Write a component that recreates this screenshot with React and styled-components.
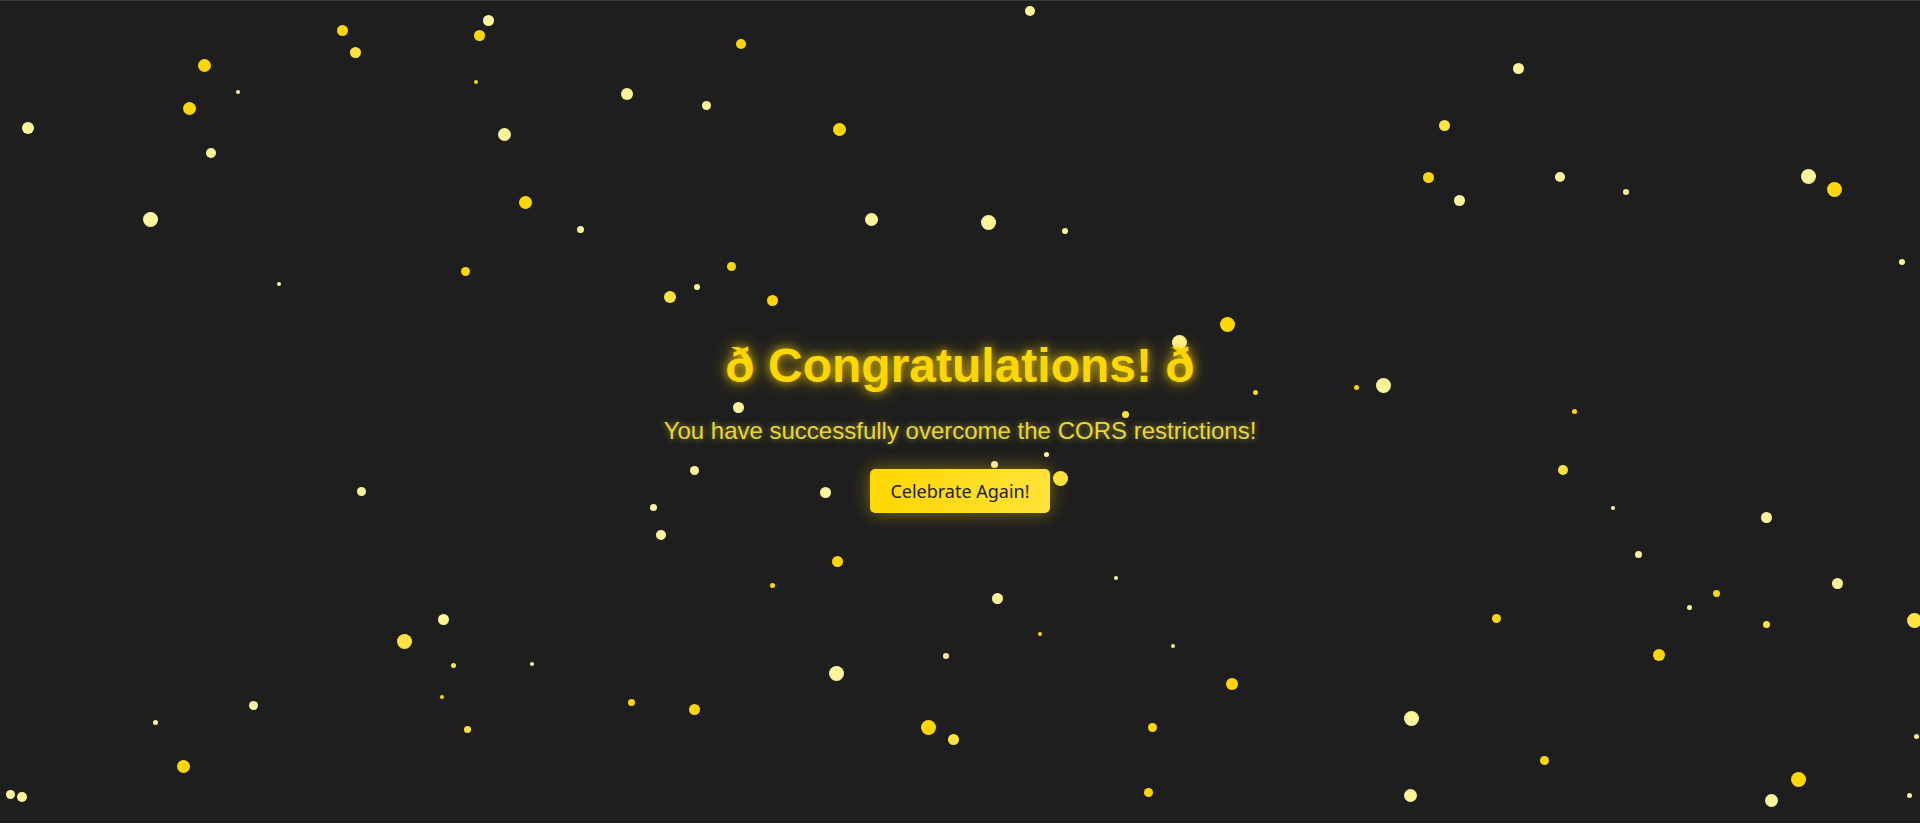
import React from 'react'
import styled, { createGlobalStyle } from 'styled-components'

const GlobalStyle = createGlobalStyle`
  html, body {
    margin: 0;
    padding: 0;
    background: #ffffff;
  }
`

const COLORS = {
  g: '#ffd700',
  m: '#ffe23d',
  p: '#fff49a',
}

// confetti measured on a 1568 x 674 canvas: [x, y, size, colour]
const CONFETTI = [
  [841, 8, 8, 'p'], [280, 24, 9, 'g'], [399, 16, 9, 'p'], [392, 28, 9, 'g'],
  [290, 42, 9, 'm'], [167, 53, 11, 'g'], [605, 35, 8, 'g'], [194, 74, 3, 'p'],
  [389, 66, 3, 'g'], [512, 76, 10, 'p'], [155, 88, 11, 'g'], [577, 85, 7, 'p'],
  [23, 104, 10, 'p'], [412, 109, 11, 'p'], [686, 105, 11, 'g'], [172, 124, 8, 'p'],
  [1240, 55, 9, 'p'], [1180, 102, 9, 'm'], [1167, 144, 9, 'g'], [1192, 163, 9, 'p'],
  [1274, 144, 8, 'p'], [1328, 156, 5, 'p'], [1477, 143, 12, 'p'], [1498, 154, 12, 'g'],
  [1553, 213, 5, 'p'], [123, 178, 12, 'p'], [429, 165, 11, 'g'], [474, 187, 6, 'p'],
  [712, 179, 11, 'p'], [807, 181, 12, 'p'], [870, 188, 5, 'p'], [228, 231, 3, 'p'],
  [380, 221, 7, 'g'], [597, 217, 7, 'g'], [569, 234, 5, 'p'], [547, 242, 10, 'm'],
  [631, 245, 9, 'g'], [963, 279, 12, 'p'], [1002, 264, 12, 'g'], [1025, 320, 4, 'g'],
  [1108, 316, 4, 'g'], [1130, 314, 12, 'p'], [603, 332, 9, 'p'], [919, 338, 6, 'm'],
  [1286, 335, 4, 'g'], [855, 370, 4, 'p'], [812, 379, 6, 'p'], [866, 390, 12, 'm'],
  [567, 383, 7, 'p'], [674, 401, 9, 'p'], [295, 400, 7, 'p'], [1276, 383, 8, 'm'],
  [534, 414, 6, 'p'], [540, 436, 8, 'p'], [1317, 414, 3, 'p'], [1443, 422, 9, 'p'],
  [684, 458, 9, 'g'], [1338, 452, 6, 'p'], [631, 477, 4, 'g'], [911, 471, 3, 'p'],
  [1501, 476, 9, 'p'], [1402, 484, 6, 'g'], [1380, 495, 4, 'p'], [815, 488, 9, 'p'],
  [362, 505, 9, 'p'], [1222, 504, 7, 'g'], [1443, 509, 6, 'm'], [1563, 506, 12, 'm'],
  [330, 523, 12, 'm'], [849, 517, 3, 'g'], [958, 527, 3, 'p'], [370, 543, 4, 'm'],
  [434, 541, 3, 'p'], [1355, 534, 10, 'g'], [773, 535, 5, 'p'], [683, 549, 12, 'p'],
  [1006, 558, 10, 'g'], [361, 568, 3, 'g'], [516, 573, 6, 'g'], [567, 579, 9, 'g'],
  [207, 575, 7, 'p'], [127, 589, 4, 'p'], [1153, 586, 12, 'p'], [758, 593, 12, 'g'],
  [941, 593, 7, 'g'], [382, 595, 6, 'm'], [779, 603, 9, 'm'], [1565, 601, 4, 'p'],
  [150, 625, 11, 'g'], [1261, 620, 7, 'g'], [1469, 636, 12, 'g'], [938, 646, 7, 'g'],
  [1152, 649, 11, 'p'], [1447, 653, 11, 'p'], [8, 648, 7, 'p'], [18, 650, 8, 'p'],
  [1559, 649, 4, 'p'],
]

const SCALE = 1920 / 1568

const Stage = styled.div`
  position: relative;
  overflow: hidden;
  height: 822px;
  border-top: 1px solid #3a3a3a;
  background: #1e1e1e;
  display: flex;
  justify-content: center;
  align-items: center;
  font-family: 'Liberation Sans', Arial, sans-serif;
`

const Content = styled.div`
  position: relative;
  z-index: 1;
  display: flex;
  flex-direction: column;
  align-items: center;
  margin-top: 26px;
`

const Title = styled.h1`
  margin: 0 0 24px;
  font-size: 48px;
  font-weight: 700;
  line-height: 55px;
  color: #ffd700;
  text-shadow: 0 0 10px rgba(255, 215, 0, 0.8), 0 0 20px rgba(255, 215, 0, 0.45);
`

const Subtitle = styled.p`
  margin: 0 0 24px;
  font-size: 24px;
  line-height: 28px;
  color: #e8d738;
  text-shadow: 0 0 6px rgba(255, 235, 59, 0.55);
`

const CelebrateButton = styled.button`
  width: 180px;
  height: 44px;
  border: none;
  border-radius: 5px;
  background: linear-gradient(90deg, #ffd700, #ffe238);
  color: #222222;
  font-family: 'Noto Sans', sans-serif;
  font-size: 18px;
  cursor: pointer;
  box-shadow: 0 0 18px rgba(255, 215, 0, 0.45);
`

const Dot = styled.span.attrs(({ $x, $y, $size }) => ({
  style: {
    left: Math.round($x * SCALE - ($size * SCALE) / 2),
    top: Math.round($y * SCALE - ($size * SCALE) / 2),
    width: Math.round($size * SCALE),
    height: Math.round($size * SCALE),
  },
}))`
  position: absolute;
  border-radius: 50%;
  background: ${({ $tone }) => COLORS[$tone]};
`

const App = () => {
  return (
    <>
      <GlobalStyle />
      <Stage>
        {CONFETTI.map(([x, y, size, tone], i) => (
          <Dot key={i} $x={x} $y={y} $size={size} $tone={tone} />
        ))}
        <Content>
          <Title>ð Congratulations! ð</Title>
          <Subtitle>You have successfully overcome the CORS restrictions!</Subtitle>
          <CelebrateButton>Celebrate Again!</CelebrateButton>
        </Content>
      </Stage>
    </>
  )
}

export default App
